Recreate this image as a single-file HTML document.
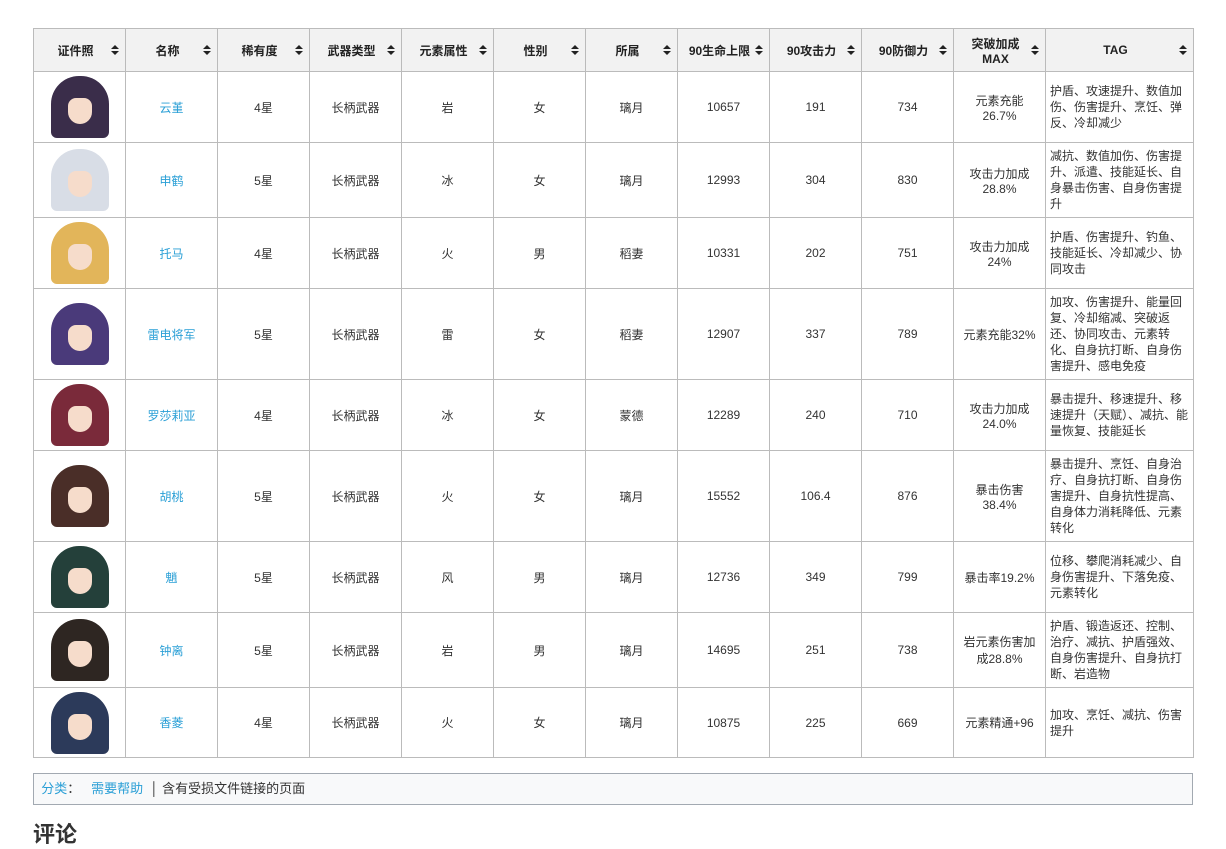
<!DOCTYPE html>
<html><head><meta charset="utf-8"><style>
body{margin:0;background:#fff;font-family:"Liberation Sans","Noto Sans CJK SC",sans-serif;font-size:12px;color:#333;}
table{position:absolute;left:33px;top:28px;border-collapse:collapse;table-layout:fixed;width:1161px;}
td,th{border:1px solid #bbbbbb;text-align:center;padding:0;}
th{background:#f2f2f2;font-weight:bold;font-size:12px;height:42px;position:relative;color:#222;padding-right:8px}
th:after{content:"";position:absolute;right:6px;top:16px;border:4px solid transparent;border-bottom:4px solid #222;border-top:0;}
th:before{content:"";position:absolute;right:6px;top:22px;border:4px solid transparent;border-top:4px solid #222;border-bottom:0;}
td.t{text-align:left;padding:0 4px;line-height:16px;}
a{color:#2a9fd6;text-decoration:none}
.av{width:58px;height:62px;margin:0 auto;border-radius:28px 28px 6px 6px;position:relative;overflow:hidden}
.av i{position:absolute;left:17px;top:22px;width:24px;height:26px;background:#f6dccb;border-radius:8px 8px 12px 12px}
.cat{position:absolute;left:33px;top:773px;width:1158px;height:30px;border:1px solid #a2a9b1;background:#f8f9fa;font-size:13px;line-height:30px;}
h2{position:absolute;left:33px;top:817px;margin:0;font-size:22px;}
</style></head><body>
<table>
<colgroup><col style="width:92px"><col style="width:92px"><col style="width:92px"><col style="width:92px"><col style="width:92px"><col style="width:92px"><col style="width:92px"><col style="width:92px"><col style="width:92px"><col style="width:92px"><col style="width:92px"><col style="width:148px"></colgroup>
<tr><th>证件照</th><th>名称</th><th>稀有度</th><th>武器类型</th><th>元素属性</th><th>性别</th><th>所属</th><th>90生命上限</th><th>90攻击力</th><th>90防御力</th><th>突破加成<br>MAX</th><th>TAG</th></tr>
<tr style="height:71px"><td><div class="av" style="background:#3a2d4a"><i></i></div></td><td><a>云堇</a></td><td>4星</td><td>长柄武器</td><td>岩</td><td>女</td><td>璃月</td><td>10657</td><td>191</td><td>734</td><td>元素充能<br>26.7%</td><td class="t">护盾、攻速提升、数值加伤、伤害提升、烹饪、弹反、冷却减少</td></tr>
<tr style="height:75px"><td><div class="av" style="background:#d8dde6"><i></i></div></td><td><a>申鹤</a></td><td>5星</td><td>长柄武器</td><td>冰</td><td>女</td><td>璃月</td><td>12993</td><td>304</td><td>830</td><td>攻击力加成<br>28.8%</td><td class="t">减抗、数值加伤、伤害提升、派遣、技能延长、自身暴击伤害、自身伤害提升</td></tr>
<tr style="height:71px"><td><div class="av" style="background:#e2b55a"><i></i></div></td><td><a>托马</a></td><td>4星</td><td>长柄武器</td><td>火</td><td>男</td><td>稻妻</td><td>10331</td><td>202</td><td>751</td><td>攻击力加成<br>24%</td><td class="t">护盾、伤害提升、钓鱼、技能延长、冷却减少、协同攻击</td></tr>
<tr style="height:91px"><td><div class="av" style="background:#4a3a7a"><i></i></div></td><td><a>雷电将军</a></td><td>5星</td><td>长柄武器</td><td>雷</td><td>女</td><td>稻妻</td><td>12907</td><td>337</td><td>789</td><td>元素充能32%</td><td class="t">加攻、伤害提升、能量回复、冷却缩减、突破返还、协同攻击、元素转化、自身抗打断、自身伤害提升、感电免疫</td></tr>
<tr style="height:71px"><td><div class="av" style="background:#7a2a3a"><i></i></div></td><td><a>罗莎莉亚</a></td><td>4星</td><td>长柄武器</td><td>冰</td><td>女</td><td>蒙德</td><td>12289</td><td>240</td><td>710</td><td>攻击力加成<br>24.0%</td><td class="t">暴击提升、移速提升、移速提升（天赋）、减抗、能量恢复、技能延长</td></tr>
<tr style="height:91px"><td><div class="av" style="background:#4a2e28"><i></i></div></td><td><a>胡桃</a></td><td>5星</td><td>长柄武器</td><td>火</td><td>女</td><td>璃月</td><td>15552</td><td>106.4</td><td>876</td><td>暴击伤害<br>38.4%</td><td class="t">暴击提升、烹饪、自身治疗、自身抗打断、自身伤害提升、自身抗性提高、自身体力消耗降低、元素转化</td></tr>
<tr style="height:71px"><td><div class="av" style="background:#24403a"><i></i></div></td><td><a>魈</a></td><td>5星</td><td>长柄武器</td><td>风</td><td>男</td><td>璃月</td><td>12736</td><td>349</td><td>799</td><td>暴击率19.2%</td><td class="t">位移、攀爬消耗减少、自身伤害提升、下落免疫、元素转化</td></tr>
<tr style="height:75px"><td><div class="av" style="background:#2e2622"><i></i></div></td><td><a>钟离</a></td><td>5星</td><td>长柄武器</td><td>岩</td><td>男</td><td>璃月</td><td>14695</td><td>251</td><td>738</td><td>岩元素伤害加<br>成28.8%</td><td class="t">护盾、锻造返还、控制、治疗、减抗、护盾强效、自身伤害提升、自身抗打断、岩造物</td></tr>
<tr style="height:70px"><td><div class="av" style="background:#2c3a5a"><i></i></div></td><td><a>香菱</a></td><td>4星</td><td>长柄武器</td><td>火</td><td>女</td><td>璃月</td><td>10875</td><td>225</td><td>669</td><td>元素精通+96</td><td class="t">加攻、烹饪、减抗、伤害提升</td></tr>
</table>
<div class="cat">&nbsp;&nbsp;<a>分类</a>：&nbsp;&nbsp;&nbsp;<a>需要帮助</a> &nbsp;│ 含有受损文件链接的页面</div>
<h2>评论</h2>
</body></html>
